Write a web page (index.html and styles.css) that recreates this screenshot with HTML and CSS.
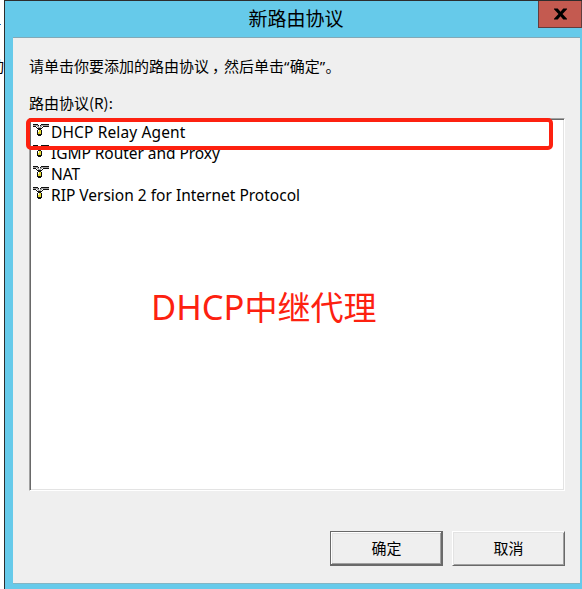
FILE: index.html
```html
<!DOCTYPE html>
<html lang="zh-CN">
<head>
<meta charset="utf-8">
<title>新路由协议</title>
<link rel="stylesheet" href="styles.css">
</head>
<body>
<svg class="defs" width="0" height="0" aria-hidden="true">
  <symbol id="protocol" viewBox="0 0 16 13">
    <path fill="#a0a0a0" d="M0 1h5v1H0zM8 1h8v1H8zM4 2h2v1H4zM7 2h2v1H7zM5 3h3v1H5z"/>
    <path fill="#111" d="M0 0h5v1H0zM8 0h8v1H8zM5 1h1v1H5zM7 1h1v1H7zM0 2h3v1H0zM10 2h6v1h-6zM3 3h1v1H3zM9 3h1v1H9zM4 4h1v1H4zM8 4h1v1H8zM5 4h3v2H5zM4 6h5v5H4zM5 11h3v1H5z"/>
    <path fill="#e6dc32" d="M5 6h3v4H5z"/>
    <path fill="#fff" d="M5 6h1v2H5z"/>
  </symbol>
</svg>
<div class="behind"><span class="behind-link"></span><span class="behind-text">动</span></div>
<main class="window">
  <header class="titlebar">
    <h1>新路由协议</h1>
    <button class="close" aria-label="关闭"><svg width="13" height="12" viewBox="0 0 14 12"><path d="M0 0h4l3 3.500L10 0h4v1L9.200 6l4.800 5v1h-4L7 8.500l-3 3.500H0v-1L4.800 6 0 1z"/></svg></button>
  </header>
  <section class="client">
    <p class="prompt">请单击你要添加的路由协议<span class="comma">，</span>然后单击<span class="quote">“</span>确定<span class="quote">”</span>。</p>
    <p class="label">路由协议(R):</p>
    <div class="list">
      <div class="row"><svg><use href="#protocol"/></svg><span class="n1">DHCP Relay Agent</span></div>
      <div class="row"><svg><use href="#protocol"/></svg><span class="n2">IGMP Router and Proxy</span></div>
      <div class="row"><svg><use href="#protocol"/></svg><span class="n3">NAT</span></div>
      <div class="row"><svg><use href="#protocol"/></svg><span class="n4">RIP Version 2 for Internet Protocol</span></div>
      <div class="highlight"></div>
      <div class="note"><span class="latin">DHCP</span>中继代理</div>
    </div>
    <div class="actions">
      <button class="btn default"><span>确定</span></button>
      <button class="btn"><span>取消</span></button>
    </div>
  </section>
</main>
</body>
</html>
```

FILE: styles.css
```css
* { box-sizing: border-box; }
body {
  margin: 0;
  width: 582px;
  height: 589px;
  display: flex;
  overflow: hidden;
  background: #fff;
  color: #000;
  font: 15px/20px "Noto Sans CJK SC", sans-serif;
}
h1, p { margin: 0; font-weight: 400; white-space: nowrap; }
button { margin: 0; padding: 0; font: inherit; color: inherit; border-radius: 0; }
.defs { position: absolute; }
.behind { position: relative; width: 4px; flex: none; overflow: hidden; }
.behind-link { position: absolute; top: 24px; left: 0; width: 1px; height: 1px; background: #1979ca; }
.behind-text { position: absolute; top: 56px; right: 0; white-space: nowrap; }
.window {
  flex: 1;
  display: flex;
  flex-direction: column;
  border: solid #2d2d2d;
  border-width: 1px 0 0 1px;
  background: #66caea;
}
.titlebar { position: relative; height: 36px; flex: none; }
.titlebar h1 { padding: 4px 0 0 5px; font-size: 19px; line-height: 26px; text-align: center; }
.close {
  position: absolute;
  top: 0;
  right: 0;
  width: 44px;
  height: 27px;
  display: flex;
  align-items: center;
  justify-content: center;
  background: #c45a50;
  border: 1px solid #623c3d;
  border-top: 0;
}
.client {
  width: 567px;
  height: 547px;
  margin-left: 8px;
  padding: 18px 15px 0 16px;
  border-top: 1px solid #82a9b7;
  border-bottom: 1px solid #82b5c4;
  background: #efefef;
}
.prompt { height: 20px; }
.comma { display: inline-block; padding-left: 3px; margin-right: -3px; }
.quote { font-family: "Noto Sans", sans-serif; font-size: 15px; line-height: 0; letter-spacing: .3px; }
.label { margin: 17px 0 5px; }
.list {
  position: relative;
  width: 536px;
  height: 373px;
  border: 1px solid;
  border-color: #a0a0a0 #fff #fff #a0a0a0;
  background: #fff;
  padding: 3px 4px;
  box-shadow: inset 1px 1px #696969, inset -1px -1px #e3e3e3;
}
.row { display: flex; height: 21px; align-items: flex-start; }
.row svg { width: 16px; height: 13px; margin: 2px 2px 0 -1px; shape-rendering: crispEdges; flex: none; }
.row span { font: 15.500px/21px "Noto Sans", sans-serif; white-space: nowrap; }
.row .n1 { letter-spacing: .13px; }
.row .n2 { letter-spacing: -.05px; }
.highlight {
  position: absolute;
  left: -4px;
  top: -1px;
  width: 527px;
  height: 32px;
  border: 4px solid #fd2110;
  border-radius: 5px;
}
.note {
  position: absolute;
  left: 121px;
  top: 163px;
  color: #fd2110;
  font-size: 33px;
  line-height: 48px;
  white-space: nowrap;
}
.latin { font-family: "Noto Sans", sans-serif; font-size: 34.500px; line-height: 0; }
.actions { display: flex; gap: 9px; justify-content: flex-end; margin-top: 40px; }
.btn {
  width: 113px;
  height: 35px;
  border: 1px solid;
  border-color: #fff #696969 #696969 #fff;
  background: #efefef;
  box-shadow: inset 1px 1px #e3e3e3, inset -1px -1px #a0a0a0;
}
.btn span { position: relative; top: -1px; }
.btn.default {
  border-color: #696969;
  box-shadow: inset -1px -1px #696969, inset 1px 1px #fff, inset -2px -2px #a0a0a0, inset 2px 2px #e3e3e3;
}
```
